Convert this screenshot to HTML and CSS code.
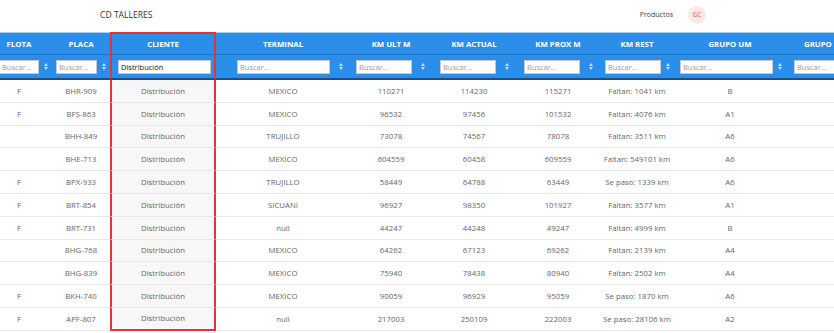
FILE: index.html
```html
<!DOCTYPE html>
<html lang="es">
  <head>
    <meta charset="utf-8" />
    <meta name="viewport" content="width=device-width, initial-scale=1.0" />
    <title>CD Talleres</title>
    <link rel="stylesheet" href="styles.css">
  </head>
  <body>
    <header class="topbar">
      <span class="brand">CD TALLERES</span>
      <div class="user-menu">
        <a href="#" class="menu-link">Productos</a>
        <span class="avatar">GC</span>
      </div>
    </header>

    <div class="table-wrap">
      <table class="grid">
        <colgroup>
          <col class="c-flota">
          <col class="c-placa">
          <col class="c-cliente">
          <col class="c-terminal">
          <col class="c-ult">
          <col class="c-actual">
          <col class="c-prox">
          <col class="c-rest">
          <col class="c-grupo">
          <col class="c-grupo-s">
        </colgroup>
        <thead>
          <tr class="head-row">
            <th>FLOTA</th>
            <th>PLACA</th>
            <th class="hl">CLIENTE</th>
            <th>TERMINAL</th>
            <th>KM ULT M</th>
            <th>KM ACTUAL</th>
            <th>KM PROX M</th>
            <th>KM REST</th>
            <th>GRUPO UM</th>
            <th class="left">GRUPO S</th>
          </tr>
          <tr class="filter-row">
            <th><div class="filter tight"><input class="w-flota" placeholder="Buscar..."><svg class="sort" viewBox="0 0 4 7"><path d="M2 0L4 3H0Z M0 4H4L2 7Z"/></svg></div></th>
            <th><div class="filter tight"><input class="w-sm" placeholder="Buscar..."><svg class="sort" viewBox="0 0 4 7"><path d="M2 0L4 3H0Z M0 4H4L2 7Z"/></svg></div></th>
            <th class="hl"><div class="filter active"><input class="w-lg" value="Distribución"></div></th>
            <th><div class="filter"><input class="w-lg" placeholder="Buscar..."><svg class="sort" viewBox="0 0 4 7"><path d="M2 0L4 3H0Z M0 4H4L2 7Z"/></svg></div></th>
            <th><div class="filter"><input class="w-md" placeholder="Buscar..."><svg class="sort" viewBox="0 0 4 7"><path d="M2 0L4 3H0Z M0 4H4L2 7Z"/></svg></div></th>
            <th><div class="filter"><input class="w-md" placeholder="Buscar..."><svg class="sort" viewBox="0 0 4 7"><path d="M2 0L4 3H0Z M0 4H4L2 7Z"/></svg></div></th>
            <th><div class="filter"><input class="w-md" placeholder="Buscar..."><svg class="sort" viewBox="0 0 4 7"><path d="M2 0L4 3H0Z M0 4H4L2 7Z"/></svg></div></th>
            <th><div class="filter tight"><input class="w-md" placeholder="Buscar..."><svg class="sort" viewBox="0 0 4 7"><path d="M2 0L4 3H0Z M0 4H4L2 7Z"/></svg></div></th>
            <th><div class="filter tight"><input class="w-lg" placeholder="Buscar..."><svg class="sort" viewBox="0 0 4 7"><path d="M2 0L4 3H0Z M0 4H4L2 7Z"/></svg></div></th>
            <th><div class="filter tight"><input class="w-lg" placeholder="Buscar..."><svg class="sort" viewBox="0 0 4 7"><path d="M2 0L4 3H0Z M0 4H4L2 7Z"/></svg></div></th>
          </tr>
        </thead>
        <tbody>
          <tr><td>F</td><td>BHR-909</td><td class="hl">Distribución</td><td>MEXICO</td><td>110271</td><td>114230</td><td>115271</td><td>Faltan: 1041 km</td><td>B</td><td></td></tr>
          <tr><td>F</td><td>BFS-863</td><td class="hl">Distribución</td><td>MEXICO</td><td>96532</td><td>97456</td><td>101532</td><td>Faltan: 4076 km</td><td>A1</td><td></td></tr>
          <tr><td></td><td>BHH-849</td><td class="hl">Distribución</td><td>TRUJILLO</td><td>73078</td><td>74567</td><td>78078</td><td>Faltan: 3511 km</td><td>A6</td><td></td></tr>
          <tr><td></td><td>BHE-713</td><td class="hl">Distribución</td><td>MEXICO</td><td>604559</td><td>60458</td><td>609559</td><td>Faltan: 549101 km</td><td>A6</td><td></td></tr>
          <tr><td>F</td><td>BPX-933</td><td class="hl">Distribución</td><td>TRUJILLO</td><td>58449</td><td>64788</td><td>63449</td><td>Se paso: 1339 km</td><td>A6</td><td></td></tr>
          <tr><td>F</td><td>BRT-854</td><td class="hl">Distribución</td><td>SICUANI</td><td>96927</td><td>98350</td><td>101927</td><td>Faltan: 3577 km</td><td>A1</td><td></td></tr>
          <tr><td>F</td><td>BRT-731</td><td class="hl">Distribución</td><td>null</td><td>44247</td><td>44248</td><td>49247</td><td>Faltan: 4999 km</td><td>B</td><td></td></tr>
          <tr><td></td><td>BHG-768</td><td class="hl">Distribución</td><td>MEXICO</td><td>64262</td><td>67123</td><td>69262</td><td>Faltan: 2139 km</td><td>A4</td><td></td></tr>
          <tr><td></td><td>BHG-839</td><td class="hl">Distribución</td><td>MEXICO</td><td>75940</td><td>78438</td><td>80940</td><td>Faltan: 2502 km</td><td>A4</td><td></td></tr>
          <tr><td>F</td><td>BKH-740</td><td class="hl">Distribución</td><td>MEXICO</td><td>90059</td><td>96929</td><td>95059</td><td>Se paso: 1870 km</td><td>A6</td><td></td></tr>
          <tr class="last"><td>F</td><td>APF-807</td><td class="hl">Distribución</td><td>null</td><td>217003</td><td>250109</td><td>222003</td><td>Se paso: 28106 km</td><td>A2</td><td></td></tr>
        </tbody>
      </table>
    </div>
  </body>
</html>
```

FILE: styles.css
```css
/* Reset */
* {
  margin: 0;
  padding: 0;
  box-sizing: border-box;
}

body {
  font-family: "Open Sans", "Liberation Sans", sans-serif;
  background-color: #fff;
  color: #333;
}

/* Top bar */
.topbar {
  display: flex;
  justify-content: space-between;
  align-items: center;
  height: 29px;
  margin-bottom: 3px;
  padding: 0 128px 0 100px;
}

.brand {
  font-size: 8.6px;
  color: #333;
}

.user-menu {
  display: flex;
  align-items: center;
  gap: 15px;
}

.menu-link {
  font-size: 7px;
  color: #444;
  text-decoration: none;
}

.avatar {
  width: 18px;
  height: 18px;
  border-radius: 50%;
  background-color: #fde8e8;
  color: #ee7b7b;
  font-size: 6.5px;
  font-weight: 600;
  display: flex;
  align-items: center;
  justify-content: center;
}

/* Table */
.table-wrap {
  width: 100%;
  overflow: hidden;
}

.grid {
  margin-left: -14px;
  table-layout: fixed;
  width: 914px;
  border-collapse: separate;
  border-spacing: 0;
}

.c-flota { width: 66px; }
.c-placa { width: 58px; }
.c-cliente { width: 106px; }
.c-terminal { width: 134px; }
.c-ult { width: 82px; }
.c-actual { width: 84px; }
.c-prox { width: 84px; }
.c-rest { width: 74px; }
.c-grupo { width: 112px; }
.c-grupo-s { width: 114px; }

.grid th {
  background-color: #2b8fea;
  color: #fff;
  font-weight: 700;
  text-align: center;
  white-space: nowrap;
  overflow: hidden;
}

.head-row th {
  height: 22px;
  font-size: 7.8px;
  border-top: 1px solid #a9d1f7;
}

.head-row th.left {
  text-align: left;
  padding-left: 18px;
}

.filter-row th {
  height: 26px;
  border-top: 1px solid #1f6fbf;
  border-bottom: 2px solid #1b4f85;
}

/* Filters */
.filter {
  display: flex;
  justify-content: flex-end;
  align-items: center;
  gap: 9px;
  padding-right: 7px;
}

.filter.tight {
  gap: 5px;
  padding-right: 4px;
}

.filter.active {
  padding-right: 3px;
}

.filter input {
  height: 14px;
  border: 1px solid #c8c8c8;
  background: #fff;
  padding: 0 2px;
  font-family: inherit;
  font-size: 7.5px;
  color: #111;
  outline: none;
}

.filter input::placeholder {
  color: #9a9a9a;
}

.w-flota { width: 40px; }
.w-sm { width: 41px; }
.w-md { width: 56px; }
.w-lg { width: 93px; }

.sort {
  width: 4px;
  height: 7px;
  flex-shrink: 0;
  fill: #c4e0fa;
}

/* Rows */
.grid td {
  height: 22.8px;
  font-size: 7.8px;
  color: #666;
  text-align: center;
  white-space: nowrap;
  border-bottom: 1px solid #e8e8e8;
}

/* Highlighted column */
.grid .hl {
  border-left: 2px solid #e5333a;
  border-right: 2px solid #e5333a;
}

.grid td.hl {
  background-color: #f7f7f7;
}

.head-row th.hl {
  border-top: 2px solid #e5333a;
}

.last td.hl {
  border-bottom: 2px solid #e5333a;
}
```
